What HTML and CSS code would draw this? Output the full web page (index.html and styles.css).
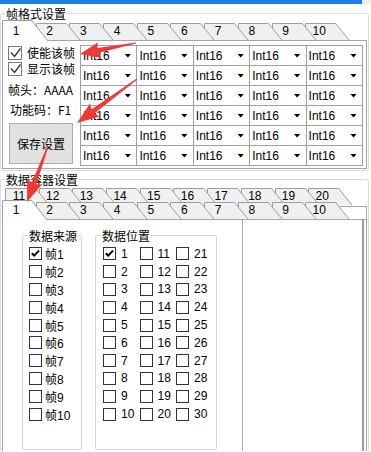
FILE: index.html
```html
<!DOCTYPE html>
<html lang="zh-CN">
<head>
<meta charset="utf-8">
<title>帧格式设置</title>
<link rel="stylesheet" href="styles.css">
</head>
<body>
<div class="titlebar"><div class="titlebar-main"></div><div class="titlebar-edge"></div></div>

<section class="group group-frame">
  <div class="group-title">帧格式设置</div>
  <div class="tabctl">
    <div class="tab-row tab-row-single">
      <div class="tab is-active"><svg class="tab-shape" width="48" height="21" viewBox="0 0 48 21"><path d="M0.5 21 V0.5 H29.5 L46 21"/></svg><span class="tab-label">1</span></div>
      <div class="tab"><svg class="tab-shape" width="46" height="18" viewBox="0 0 46 18"><path d="M0.5 17 V0.5 H30.5 L44 17"/></svg><span class="tab-label">2</span></div>
      <div class="tab"><svg class="tab-shape" width="46" height="18" viewBox="0 0 46 18"><path d="M0.5 17 V0.5 H30.5 L44 17"/></svg><span class="tab-label">3</span></div>
      <div class="tab"><svg class="tab-shape" width="46" height="18" viewBox="0 0 46 18"><path d="M0.5 17 V0.5 H30.5 L44 17"/></svg><span class="tab-label">4</span></div>
      <div class="tab"><svg class="tab-shape" width="46" height="18" viewBox="0 0 46 18"><path d="M0.5 17 V0.5 H30.5 L44 17"/></svg><span class="tab-label">5</span></div>
      <div class="tab"><svg class="tab-shape" width="46" height="18" viewBox="0 0 46 18"><path d="M0.5 17 V0.5 H30.5 L44 17"/></svg><span class="tab-label">6</span></div>
      <div class="tab"><svg class="tab-shape" width="46" height="18" viewBox="0 0 46 18"><path d="M0.5 17 V0.5 H30.5 L44 17"/></svg><span class="tab-label">7</span></div>
      <div class="tab"><svg class="tab-shape" width="46" height="18" viewBox="0 0 46 18"><path d="M0.5 17 V0.5 H30.5 L44 17"/></svg><span class="tab-label">8</span></div>
      <div class="tab"><svg class="tab-shape" width="46" height="18" viewBox="0 0 46 18"><path d="M0.5 17 V0.5 H30.5 L44 17"/></svg><span class="tab-label">9</span></div>
      <div class="tab"><svg class="tab-shape" width="46" height="18" viewBox="0 0 46 18"><path d="M0.5 17 V0.5 H30.5 L44 17"/></svg><span class="tab-label">10</span></div>
    </div>
    <div class="tab-panel frame-panel">
      <div class="frame-side">
        <label class="big-check"><span class="big-box"><svg width="14" height="14" viewBox="0 0 14 14"><path d="M3 6.5 L6.5 10.5 L12.5 2.5"/></svg></span>使能该帧</label>
        <label class="big-check"><span class="big-box"><svg width="14" height="14" viewBox="0 0 14 14"><path d="M3 6.5 L6.5 10.5 L12.5 2.5"/></svg></span>显示该帧</label>
        <div class="info">帧头：AAAA</div>
        <div class="info info-func">功能码：F1</div>
        <button class="save-btn" type="button">保存设置</button>
      </div>
      <div class="type-grid">
        <div class="combo"><span>Int16</span><span class="caret"></span></div>
        <div class="combo"><span>Int16</span><span class="caret"></span></div>
        <div class="combo"><span>Int16</span><span class="caret"></span></div>
        <div class="combo"><span>Int16</span><span class="caret"></span></div>
        <div class="combo"><span>Int16</span><span class="caret"></span></div>
        <div class="combo"><span>Int16</span><span class="caret"></span></div>
        <div class="combo"><span>Int16</span><span class="caret"></span></div>
        <div class="combo"><span>Int16</span><span class="caret"></span></div>
        <div class="combo"><span>Int16</span><span class="caret"></span></div>
        <div class="combo"><span>Int16</span><span class="caret"></span></div>
        <div class="combo"><span>Int16</span><span class="caret"></span></div>
        <div class="combo"><span>Int16</span><span class="caret"></span></div>
        <div class="combo"><span>Int16</span><span class="caret"></span></div>
        <div class="combo"><span>Int16</span><span class="caret"></span></div>
        <div class="combo"><span>Int16</span><span class="caret"></span></div>
        <div class="combo"><span>Int16</span><span class="caret"></span></div>
        <div class="combo"><span>Int16</span><span class="caret"></span></div>
        <div class="combo"><span>Int16</span><span class="caret"></span></div>
        <div class="combo"><span>Int16</span><span class="caret"></span></div>
        <div class="combo"><span>Int16</span><span class="caret"></span></div>
        <div class="combo"><span>Int16</span><span class="caret"></span></div>
        <div class="combo"><span>Int16</span><span class="caret"></span></div>
        <div class="combo"><span>Int16</span><span class="caret"></span></div>
        <div class="combo"><span>Int16</span><span class="caret"></span></div>
        <div class="combo"><span>Int16</span><span class="caret"></span></div>
        <div class="combo"><span>Int16</span><span class="caret"></span></div>
        <div class="combo"><span>Int16</span><span class="caret"></span></div>
        <div class="combo"><span>Int16</span><span class="caret"></span></div>
        <div class="combo"><span>Int16</span><span class="caret"></span></div>
        <div class="combo"><span>Int16</span><span class="caret"></span></div>
      </div>
    </div>
  </div>
</section>

<section class="group group-data">
  <div class="group-title">数据容器设置</div>
  <div class="tabctl">
    <div class="tab-row tab-row-back">
      <div class="tab"><svg class="tab-shape" width="46" height="18" viewBox="0 0 46 18"><path d="M0.5 17 V0.5 H30.5 L44 17"/></svg><span class="tab-label">11</span></div>
      <div class="tab"><svg class="tab-shape" width="46" height="18" viewBox="0 0 46 18"><path d="M0.5 17 V0.5 H30.5 L44 17"/></svg><span class="tab-label">12</span></div>
      <div class="tab"><svg class="tab-shape" width="46" height="18" viewBox="0 0 46 18"><path d="M0.5 17 V0.5 H30.5 L44 17"/></svg><span class="tab-label">13</span></div>
      <div class="tab"><svg class="tab-shape" width="46" height="18" viewBox="0 0 46 18"><path d="M0.5 17 V0.5 H30.5 L44 17"/></svg><span class="tab-label">14</span></div>
      <div class="tab"><svg class="tab-shape" width="46" height="18" viewBox="0 0 46 18"><path d="M0.5 17 V0.5 H30.5 L44 17"/></svg><span class="tab-label">15</span></div>
      <div class="tab"><svg class="tab-shape" width="46" height="18" viewBox="0 0 46 18"><path d="M0.5 17 V0.5 H30.5 L44 17"/></svg><span class="tab-label">16</span></div>
      <div class="tab"><svg class="tab-shape" width="46" height="18" viewBox="0 0 46 18"><path d="M0.5 17 V0.5 H30.5 L44 17"/></svg><span class="tab-label">17</span></div>
      <div class="tab"><svg class="tab-shape" width="46" height="18" viewBox="0 0 46 18"><path d="M0.5 17 V0.5 H30.5 L44 17"/></svg><span class="tab-label">18</span></div>
      <div class="tab"><svg class="tab-shape" width="46" height="18" viewBox="0 0 46 18"><path d="M0.5 17 V0.5 H30.5 L44 17"/></svg><span class="tab-label">19</span></div>
      <div class="tab"><svg class="tab-shape" width="46" height="18" viewBox="0 0 46 18"><path d="M0.5 17 V0.5 H30.5 L44 17"/></svg><span class="tab-label">20</span></div>
    </div>
    <div class="tab-row tab-row-front">
      <div class="tab is-active"><svg class="tab-shape" width="48" height="20" viewBox="0 0 48 20"><path d="M0.5 20 V0.5 H29.5 L45 20"/></svg><span class="tab-label">1</span></div>
      <div class="tab"><svg class="tab-shape" width="46" height="18" viewBox="0 0 46 18"><path d="M0.5 17 V0.5 H30.5 L44 17"/></svg><span class="tab-label">2</span></div>
      <div class="tab"><svg class="tab-shape" width="46" height="18" viewBox="0 0 46 18"><path d="M0.5 17 V0.5 H30.5 L44 17"/></svg><span class="tab-label">3</span></div>
      <div class="tab"><svg class="tab-shape" width="46" height="18" viewBox="0 0 46 18"><path d="M0.5 17 V0.5 H30.5 L44 17"/></svg><span class="tab-label">4</span></div>
      <div class="tab"><svg class="tab-shape" width="46" height="18" viewBox="0 0 46 18"><path d="M0.5 17 V0.5 H30.5 L44 17"/></svg><span class="tab-label">5</span></div>
      <div class="tab"><svg class="tab-shape" width="46" height="18" viewBox="0 0 46 18"><path d="M0.5 17 V0.5 H30.5 L44 17"/></svg><span class="tab-label">6</span></div>
      <div class="tab"><svg class="tab-shape" width="46" height="18" viewBox="0 0 46 18"><path d="M0.5 17 V0.5 H30.5 L44 17"/></svg><span class="tab-label">7</span></div>
      <div class="tab"><svg class="tab-shape" width="46" height="18" viewBox="0 0 46 18"><path d="M0.5 17 V0.5 H30.5 L44 17"/></svg><span class="tab-label">8</span></div>
      <div class="tab"><svg class="tab-shape" width="46" height="18" viewBox="0 0 46 18"><path d="M0.5 17 V0.5 H30.5 L44 17"/></svg><span class="tab-label">9</span></div>
      <div class="tab"><svg class="tab-shape" width="46" height="18" viewBox="0 0 46 18"><path d="M0.5 17 V0.5 H30.5 L44 17"/></svg><span class="tab-label">10</span></div>
      <div class="tab-filler"></div>
    </div>
    <div class="tab-panel data-panel">
      <div class="subgroup source-group">
        <div class="subgroup-title">数据来源</div>
        <div class="source-list">
          <label class="chk"><span class="box is-checked"><svg width="11" height="11" viewBox="0 0 11 11"><path d="M1.8 5.2 L4.2 7.6 L9 2.6"/></svg></span>帧1</label>
          <label class="chk"><span class="box"></span>帧2</label>
          <label class="chk"><span class="box"></span>帧3</label>
          <label class="chk"><span class="box"></span>帧4</label>
          <label class="chk"><span class="box"></span>帧5</label>
          <label class="chk"><span class="box"></span>帧6</label>
          <label class="chk"><span class="box"></span>帧7</label>
          <label class="chk"><span class="box"></span>帧8</label>
          <label class="chk"><span class="box"></span>帧9</label>
          <label class="chk"><span class="box"></span>帧10</label>
        </div>
      </div>
      <div class="subgroup pos-group">
        <div class="subgroup-title">数据位置</div>
        <div class="pos-grid">
          <label class="chk pos"><span class="box is-checked"><svg width="11" height="11" viewBox="0 0 11 11"><path d="M1.8 5.2 L4.2 7.6 L9 2.6"/></svg></span>1</label>
          <label class="chk pos"><span class="box"></span>2</label>
          <label class="chk pos"><span class="box"></span>3</label>
          <label class="chk pos"><span class="box"></span>4</label>
          <label class="chk pos"><span class="box"></span>5</label>
          <label class="chk pos"><span class="box"></span>6</label>
          <label class="chk pos"><span class="box"></span>7</label>
          <label class="chk pos"><span class="box"></span>8</label>
          <label class="chk pos"><span class="box"></span>9</label>
          <label class="chk pos"><span class="box"></span>10</label>
          <label class="chk pos"><span class="box"></span>11</label>
          <label class="chk pos"><span class="box"></span>12</label>
          <label class="chk pos"><span class="box"></span>13</label>
          <label class="chk pos"><span class="box"></span>14</label>
          <label class="chk pos"><span class="box"></span>15</label>
          <label class="chk pos"><span class="box"></span>16</label>
          <label class="chk pos"><span class="box"></span>17</label>
          <label class="chk pos"><span class="box"></span>18</label>
          <label class="chk pos"><span class="box"></span>19</label>
          <label class="chk pos"><span class="box"></span>20</label>
          <label class="chk pos"><span class="box"></span>21</label>
          <label class="chk pos"><span class="box"></span>22</label>
          <label class="chk pos"><span class="box"></span>23</label>
          <label class="chk pos"><span class="box"></span>24</label>
          <label class="chk pos"><span class="box"></span>25</label>
          <label class="chk pos"><span class="box"></span>26</label>
          <label class="chk pos"><span class="box"></span>27</label>
          <label class="chk pos"><span class="box"></span>28</label>
          <label class="chk pos"><span class="box"></span>29</label>
          <label class="chk pos"><span class="box"></span>30</label>
        </div>
      </div>
      <div class="preview-box"></div>
    </div>
  </div>
</section>

<svg class="annotations" width="371" height="452" viewBox="0 0 371 452">
  <polygon points="135.9,42.4 97.2,48.1 98.1,42.3 80,54 101.2,58 98.1,53 136.1,43.6"/>
  <polygon points="136.65,78.52 91.64,109.16 90,103.55 77,123 99.46,116.45 94.6,113.2 137.35,79.48"/>
  <polygon points="47.44,145.79 31.68,182.4 27.23,178.6 27,202 42.21,184.22 36.36,184.16 48.56,146.21"/>
</svg>
</body>
</html>
```

FILE: styles.css
```css
* { box-sizing: border-box; }

html, body { margin: 0; padding: 0; }

body {
  width: 371px;
  height: 452px;
  overflow: hidden;
  position: relative;
  background: #ffffff;
  color: #000;
  font-family: "Liberation Sans", "Noto Sans CJK SC", sans-serif;
  font-size: 12px;
}

/* window top edge */
.titlebar { display: flex; height: 4px; }
.titlebar-main { width: 362px; background: #1b80e0; }
.titlebar-edge { flex: 1; background: #eeeeee; }

/* group boxes */
.group {
  width: 369px;
  border: 1px solid #dcdcdc;
  border-radius: 3px;
  padding: 0 1px 1px 1px;
}
.group-frame { margin-top: 9px; }
.group-data { margin-top: 8px; height: 273px; border-bottom: none; }

.group-title {
  display: table;
  margin: -7px 0 0 3px;
  padding: 0 1px;
  background: #fff;
  line-height: 14px;
  font-family: "Noto Sans CJK SC", sans-serif;
  font-size: 12px;
}

/* tab strips */
.tab-row {
  position: relative;
  z-index: 2;
  display: flex;
  align-items: flex-end;
}
.tab-row-single { height: 21px; margin-top: -1px; margin-bottom: -1px; }
.tab-row-back { height: 18px; margin-top: 1px; padding-left: 3px; z-index: 1; }
.tab-row-front { height: 20px; margin-top: -6px; margin-bottom: -1px; }

.tab {
  position: relative;
  flex: 0 0 33.7px;
  height: 18px;
}
.tab:nth-child(1) { z-index: 10; }
.tab:nth-child(2) { z-index: 9; }
.tab:nth-child(3) { z-index: 8; }
.tab:nth-child(4) { z-index: 7; }
.tab:nth-child(5) { z-index: 6; }
.tab:nth-child(6) { z-index: 5; }
.tab:nth-child(7) { z-index: 4; }
.tab:nth-child(8) { z-index: 3; }
.tab:nth-child(9) { z-index: 2; }
.tab:nth-child(10) { z-index: 1; }
.tab.is-active { z-index: 20; }
.tab-row-single .tab.is-active { height: 21px; }
.tab-row-front .tab.is-active { height: 20px; }

.tab-shape { position: absolute; left: 0; top: 0; overflow: visible; }
.tab-shape path { fill: #f0f0f0; stroke: #9e9e9e; stroke-width: 1; }
.tab.is-active .tab-shape path { fill: #ffffff; }

.tab-label {
  position: relative;
  display: block;
  width: 28px;
  text-align: center;
  line-height: 17px;
  font-size: 12px;
}
.tab.is-active .tab-label { padding-top: 3px; }
.tab-row-front .tab.is-active .tab-label { padding-top: 2px; }

.tab-filler {
  flex: 1;
  align-self: flex-start;
  height: 13px;
  margin-top: 6px;
  background: #fff;
  border-top: 1px solid #a6a6a6;
  border-right: 1px solid #a6a6a6;
}

/* tab panels */
.tab-panel {
  background: #fff;
  border: 1px solid #a6a6a6;
}

.frame-panel {
  height: 129px;
  display: flex;
  padding: 4px 3px 2px 5px;
}

.frame-side {
  width: 72px;
  display: flex;
  flex-direction: column;
  font-family: "Noto Sans CJK SC", sans-serif;
}

.big-check {
  display: flex;
  align-items: center;
  gap: 5px;
  height: 16px;
  line-height: 16px;
  font-size: 12px;
}
.big-box {
  width: 14px;
  height: 14px;
  border: 1px solid #7a7a7a;
  background: #fff;
  display: block;
  flex: none;
  position: relative;
}
.big-box svg { position: absolute; left: -1px; top: -1px; }
.big-box path { fill: none; stroke: #333; stroke-width: 1.3; }

.info {
  margin-top: 4px;
  line-height: 18px;
  font-family: "Noto Sans CJK SC", sans-serif;
  font-size: 12px;
  white-space: nowrap;
}
.info-func { margin-top: 2px; padding-left: 2px; }

.save-btn {
  margin: 4px 0 0 1px;
  width: 64px;
  height: 41px;
  padding: 0;
  background: #e1e1e1;
  border: 1px solid #adadad;
  border-radius: 0;
  color: #000;
  font-family: "Noto Sans CJK SC", sans-serif;
  font-size: 12px;
}

.type-grid {
  width: 283px;
  display: grid;
  grid-template-columns: repeat(5, 1fr);
  grid-auto-rows: 19px;
  gap: 1px;
  background: #a0a0a0;
  border: 1px solid #a0a0a0;
}
.combo {
  background: #fff;
  display: flex;
  align-items: center;
  justify-content: space-between;
  padding: 0 5px 0 2px;
  font-size: 12px;
}
.caret {
  width: 7px;
  height: 4px;
  background: #000;
  clip-path: polygon(0 0, 100% 0, 50% 100%);
}

/* data container panel */
.data-panel {
  height: 232px;
  border-bottom: none;
  display: flex;
  align-items: flex-start;
}

.subgroup {
  margin-top: 15px;
  height: 215px;
  border: 1px solid #d5d5d5;
  border-radius: 2px;
}
.source-group { margin-left: 19px; width: 60px; }
.pos-group { margin-left: 13px; width: 122px; }

.subgroup-title {
  display: table;
  margin: -7px 0 0 5px;
  padding: 0 1px;
  background: #fff;
  line-height: 14px;
  font-family: "Noto Sans CJK SC", sans-serif;
  font-size: 12px;
}

.source-list { padding: 2px 0 0 6px; }

.chk {
  display: flex;
  align-items: center;
  gap: 3px;
  height: 17.8px;
  font-size: 12px;
  white-space: nowrap;
}
.chk.pos { gap: 5px; }

.box {
  width: 13px;
  height: 13px;
  flex: none;
  border: 1px solid #333;
  background: #fff;
  display: block;
}
.box svg { display: block; }
.box path { fill: none; stroke: #000; stroke-width: 2; }

.pos-grid {
  display: grid;
  grid-template-columns: repeat(3, 36.5px);
  grid-template-rows: repeat(10, 17.8px);
  grid-auto-flow: column;
  padding: 2px 0 0 7px;
}

.preview-box {
  margin: -1px 0 0 25px;
  width: 122px;
  height: 232px;
  border: 1px solid #a9a9a9;
  border-right: 2px solid #9c9c9c;
  border-bottom: none;
}

/* red annotation arrows */
.annotations {
  position: absolute;
  left: 0;
  top: 0;
  z-index: 100;
  pointer-events: none;
}
.annotations polygon { fill: #ee3a36; }
```
